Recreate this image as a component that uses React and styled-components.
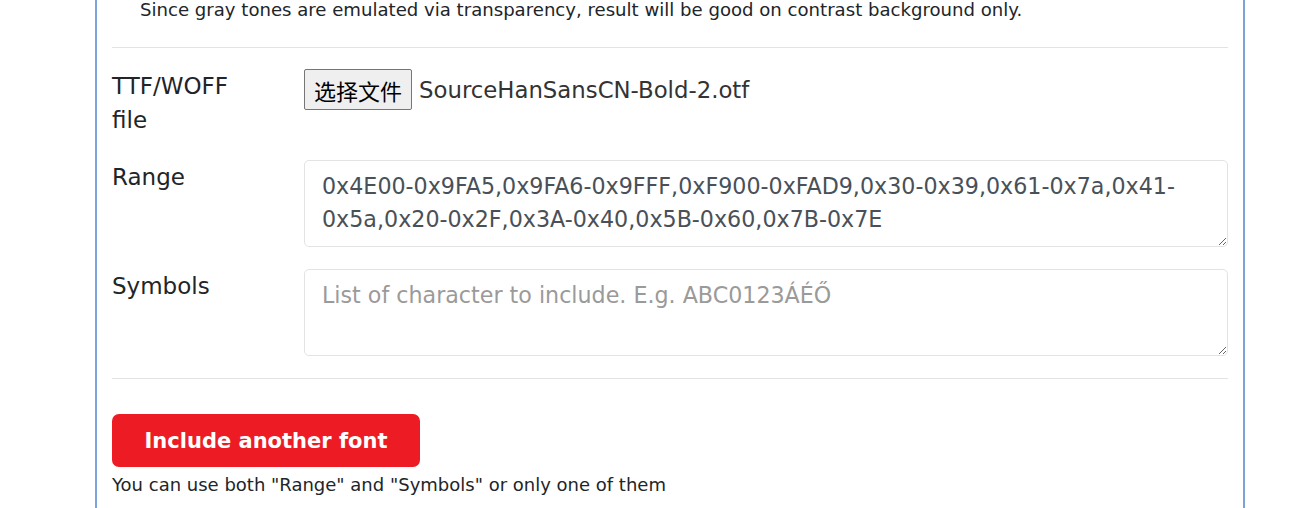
import styled, { createGlobalStyle } from "styled-components";

const GlobalStyle = createGlobalStyle`
  body {
    margin: 0;
    background: #fff;
    font-family: "DejaVu Sans", "Noto Sans CJK SC", sans-serif;
    color: #212529;
    overflow: hidden;
  }
`;

const Panel = styled.div`
  margin-left: 95px;
  width: 1150px;
  box-sizing: border-box;
  border-left: 2px solid #7ba4db;
  border-right: 2px solid #7ba4db;
  padding: 0 15px 20px;
`;

const Note = styled.p`
  margin: -5px 0 0;
  padding-left: 28px;
  font-size: 18.1px;
  line-height: 30px;
`;

const Rule = styled.hr`
  border: 0;
  border-top: 1px solid #e3e3e3;
  margin: ${(p) => p.$top}px 0 ${(p) => p.$bottom}px;
`;

const Form = styled.div`
  display: grid;
  grid-template-columns: 192px 1fr;
  row-gap: 22px;
`;

const Label = styled.label`
  font-size: 23px;
  line-height: 34px;
  padding-top: ${(p) => p.$pt || 0}px;
  padding-bottom: ${(p) => p.$pb || 0}px;
`;

const FileRow = styled.div`
  display: flex;
  align-items: center;
  gap: 7px;
  padding: 4px 0 6px;
  align-self: start;
`;

const FileButton = styled.button`
  font-family: "Noto Sans CJK SC", sans-serif;
  font-size: 22px;
  height: 41px;
  padding: 0 9px;
  background: #efefef;
  border: 1px solid #767676;
  border-radius: 2px;
  color: #000;
`;

const FileName = styled.span`
  font-size: 22.8px;
  color: #333;
`;

const Area = styled.textarea`
  display: block;
  width: 100%;
  height: 87px;
  box-sizing: border-box;
  border: 1px solid #e3e3e3;
  border-radius: 5px;
  padding: 9px 17px 7px;
  font-family: "DejaVu Sans", sans-serif;
  font-size: 22.2px;
  line-height: 33px;
  color: #495057;
  resize: vertical;
  outline: none;
  &::placeholder {
    color: #9a9a9a;
  }
`;

const RedButton = styled.button`
  width: 308px;
  height: 53px;
  border: 0;
  border-radius: 7px;
  background: #ed1c24;
  color: #fff;
  font-family: "DejaVu Sans", sans-serif;
  font-weight: bold;
  font-size: 21px;
`;

const Hint = styled.div`
  font-size: 18px;
  line-height: 36px;
`;

export default function App() {
  return (
    <>
      <GlobalStyle />
      <Panel>
        <Note>
          Since gray tones are emulated via transparency, result will be good on contrast background only.
        </Note>
        <Rule $top={22} $bottom={17} />
        <Form>
          <Label $pt={4} $pb={1}>TTF/WOFF<br />file</Label>
          <FileRow>
            <FileButton>选择文件</FileButton>
            <FileName>SourceHanSansCN-Bold-2.otf</FileName>
          </FileRow>
          <Label>Range</Label>
          <Area
            readOnly
            defaultValue="0x4E00-0x9FA5,0x9FA6-0x9FFF,0xF900-0xFAD9,0x30-0x39,0x61-0x7a,0x41-0x5a,0x20-0x2F,0x3A-0x40,0x5B-0x60,0x7B-0x7E"
          />
          <Label>Symbols</Label>
          <Area readOnly placeholder="List of character to include. E.g. ABC0123ÁÉŐ" />
        </Form>
        <Rule $top={22} $bottom={35} />
        <RedButton>Include another font</RedButton>
        <Hint>You can use both "Range" and "Symbols" or only one of them</Hint>
      </Panel>
    </>
  );
}
